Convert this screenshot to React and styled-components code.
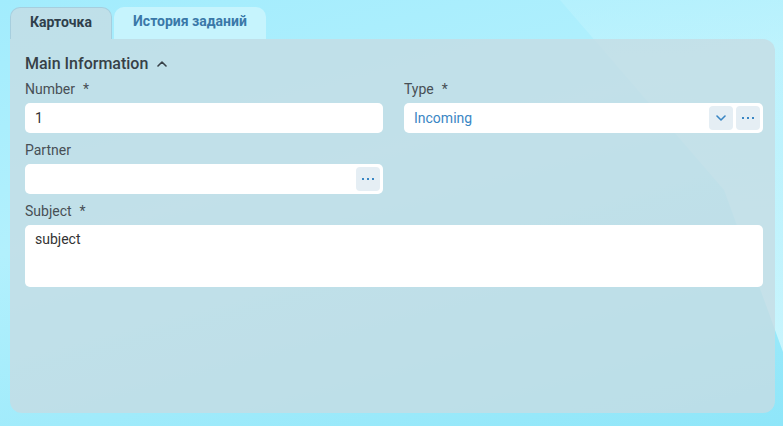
import React from "react";
import styled, { createGlobalStyle } from "styled-components";

const Global = createGlobalStyle`
  html, body { margin: 0; padding: 0; }
  body { font-family: Roboto, "Noto Sans", sans-serif; }
`;

const Page = styled.div`
  position: relative;
  width: 783px;
  height: 426px;
  overflow: hidden;
  background: linear-gradient(165deg, #a2ecfd 0%, #b2f0fd 40%, #8fe6f9 100%);
  padding: 7px 8px 13px 10px;
  box-sizing: border-box;
  display: flex;
  flex-direction: column;
  &::before {
    content: "";
    position: absolute;
    inset: 0;
    background: linear-gradient(180deg, rgba(230, 252, 255, 0.15), rgba(228, 252, 255, 0.75));
    clip-path: polygon(560px 0, 783px 0, 783px 352px, 724px 190px);
  }
`;

const Tabs = styled.div`
  position: relative;
  display: flex;
  gap: 2px;
  height: 32px;
`;

const Tab = styled.div`
  width: ${(p) => p.$w}px;
  box-sizing: border-box;
  display: flex;
  align-items: center;
  justify-content: center;
  font-size: 14px;
  font-weight: 700;
  border-radius: 10px 10px 0 0;
  color: ${(p) => (p.$active ? "#2f3f4c" : "#3a78a8")};
  background: ${(p) => (p.$active ? "rgba(198,220,228,0.8)" : "#c6f4fd")};
  border: ${(p) => (p.$active ? "1px solid rgba(150,195,215,0.6)" : "none")};
  border-bottom: none;
  padding-bottom: 4px;
`;

const Panel = styled.div`
  position: relative;
  flex: 1;
  background: rgba(198, 220, 228, 0.8);
  border-radius: 0 12px 12px 12px;
  padding: 14px 12px 0 15px;
  color: #444;
`;

const SectionHeader = styled.div`
  display: flex;
  align-items: center;
  gap: 9px;
  height: 20px;
  font-size: 16px;
  font-weight: 500;
  color: #374047;
  margin-bottom: 6px;
`;

const Grid = styled.div`
  display: grid;
  grid-template-columns: 358px 359px;
  column-gap: 21px;
  row-gap: 7px;
`;

const Field = styled.div`
  display: flex;
  flex-direction: column;
  grid-column: ${(p) => (p.$full ? "1 / -1" : "auto")};
`;

const Label = styled.div`
  font-size: 14px;
  line-height: 20px;
  color: #474f55;
  margin-bottom: 4px;
  span { margin-left: 8px; }
`;

const Input = styled.div`
  height: ${(p) => p.$h || 30}px;
  background: #fff;
  border-radius: 5px;
  display: flex;
  align-items: ${(p) => (p.$multi ? "flex-start" : "center")};
  padding: ${(p) => (p.$multi ? "6px 3px 0 10px" : "0 3px 0 10px")};
  box-sizing: border-box;
  font-size: 14px;
  color: ${(p) => (p.$link ? "#3a86c4" : "#333")};
  gap: 3px;
`;

const Value = styled.div`
  flex: 1;
`;

const IconButton = styled.div`
  width: 24px;
  height: 24px;
  border-radius: 4px;
  background: #e5eef4;
  display: flex;
  align-items: center;
  justify-content: center;
  color: #3a86c4;
`;

const Chevron = ({ up }) => (
  <svg width="10" height="6" viewBox="0 0 10 6" fill="none">
    <path
      d={up ? "M1 5 L5 1 L9 5" : "M1 1 L5 5 L9 1"}
      stroke="currentColor"
      strokeWidth="1.6"
      strokeLinecap="round"
      strokeLinejoin="round"
    />
  </svg>
);

const Dots = () => (
  <svg width="12" height="3" viewBox="0 0 12 3">
    <rect x="0" y="0" width="2" height="2" fill="currentColor" />
    <rect x="5" y="0" width="2" height="2" fill="currentColor" />
    <rect x="10" y="0" width="2" height="2" fill="currentColor" />
  </svg>
);

const HeaderChevron = styled.span`
  color: #374047;
  display: flex;
  margin-top: 1px;
`;

export default function App() {
  return (
    <>
      <Global />
      <Page>
        <Tabs>
          <Tab $active $w={102}>Карточка</Tab>
          <Tab $w={152}>История заданий</Tab>
        </Tabs>
        <Panel>
          <SectionHeader>
            Main Information
            <HeaderChevron>
              <Chevron up />
            </HeaderChevron>
          </SectionHeader>
          <Grid>
            <Field>
              <Label>
                Number<span>*</span>
              </Label>
              <Input>
                <Value>1</Value>
              </Input>
            </Field>
            <Field>
              <Label>
                Type<span>*</span>
              </Label>
              <Input $link>
                <Value>Incoming</Value>
                <IconButton>
                  <Chevron />
                </IconButton>
                <IconButton>
                  <Dots />
                </IconButton>
              </Input>
            </Field>
            <Field>
              <Label>Partner</Label>
              <Input>
                <Value />
                <IconButton>
                  <Dots />
                </IconButton>
              </Input>
            </Field>
            <div />
            <Field $full>
              <Label>
                Subject<span>*</span>
              </Label>
              <Input $multi $h={62}>
                <Value>subject</Value>
              </Input>
            </Field>
          </Grid>
        </Panel>
      </Page>
    </>
  );
}
